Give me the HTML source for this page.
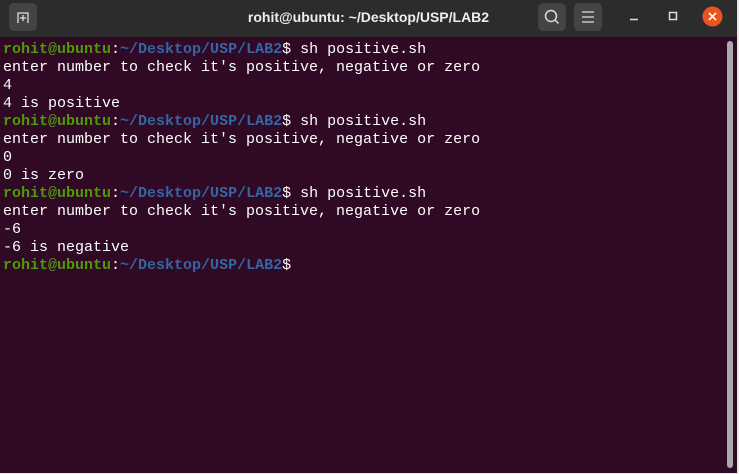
<!DOCTYPE html>
<html><head><meta charset="utf-8"><style>
html,body{margin:0;padding:0;width:739px;height:474px;overflow:hidden;background:#e8e8e8;}
.win{position:absolute;left:0;top:0;width:737px;height:473px;background:#300a24;}
.tb{position:absolute;left:0;top:0;width:737px;height:37px;background:#2c2c2c;}
.btn{position:absolute;top:3px;width:28px;height:28px;background:#444;border-radius:5px;}
.title{position:absolute;left:0;width:737px;top:0;text-align:center;color:#eee;font:bold 14px "Liberation Sans",sans-serif;line-height:34px;}
pre{position:absolute;left:3px;top:41px;margin:0;font:15px "Liberation Mono",monospace;line-height:18px;color:#fff;}
.g{color:#4e9a06;font-weight:bold}.b{color:#3465a4;font-weight:bold}
.sb{position:absolute;left:727px;top:41px;width:6px;height:427px;background:#aaa;border-radius:3px;}
</style></head><body>
<div class="win">
<div class="tb">
<div class="btn" style="left:9px"><svg width="28" height="28"><path d="M9 20V10h10v10" fill="none" stroke="#ddd" stroke-width="1.3"/><path d="M14 12v6M11 15h6" stroke="#ddd" stroke-width="1.3"/></svg></div>
<div class="title">rohit@ubuntu: ~/Desktop/USP/LAB2</div>
<div class="btn" style="left:538px"><svg width="28" height="28"><circle cx="13" cy="13" r="5.5" fill="none" stroke="#ddd" stroke-width="1.5"/><path d="M17 17l3.5 3.5" stroke="#ddd" stroke-width="1.5"/></svg></div>
<div class="btn" style="left:574px"><svg width="28" height="28"><path d="M8 9h12M8 14h12M8 19h12" stroke="#ddd" stroke-width="1.3"/></svg></div>
<svg style="position:absolute;left:620px;top:0" width="117" height="37"><path d="M10 19.5h8" stroke="#ddd" stroke-width="1.5"/><rect x="49.5" y="12.5" width="7" height="7" fill="none" stroke="#ddd" stroke-width="1.5"/><circle cx="92.5" cy="16.5" r="10" fill="#e95420"/><path d="M89 13l7 7M96 13l-7 7" stroke="#fff" stroke-width="1.6"/></svg>
</div>
<pre><span class="g">rohit@ubuntu</span>:<span class="b">~/Desktop/USP/LAB2</span>$ sh positive.sh
enter number to check it's positive, negative or zero
4
4 is positive
<span class="g">rohit@ubuntu</span>:<span class="b">~/Desktop/USP/LAB2</span>$ sh positive.sh
enter number to check it's positive, negative or zero
0
0 is zero
<span class="g">rohit@ubuntu</span>:<span class="b">~/Desktop/USP/LAB2</span>$ sh positive.sh
enter number to check it's positive, negative or zero
-6
-6 is negative
<span class="g">rohit@ubuntu</span>:<span class="b">~/Desktop/USP/LAB2</span>$</pre>
<div class="sb"></div>
</div>
</body></html>
